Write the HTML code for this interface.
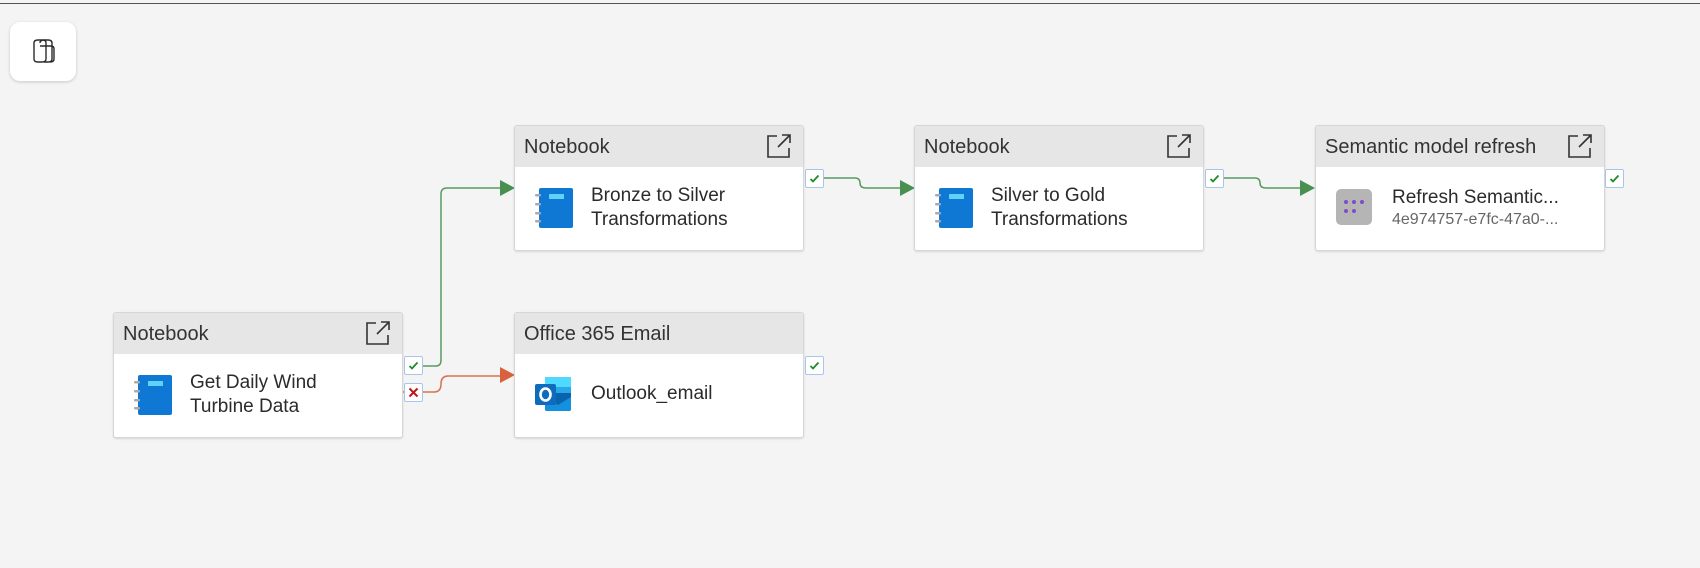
<!DOCTYPE html>
<html><head><meta charset="utf-8"><style>
html,body{margin:0;padding:0;}
body{width:1700px;height:568px;background:#f4f4f4;position:relative;overflow:hidden;font-family:"Liberation Sans",sans-serif;}
.top{position:absolute;left:0;top:3px;width:1700px;height:1px;background:#555;}
.cop{position:absolute;left:10px;top:22px;width:66px;height:59px;background:#fff;border-radius:10px;box-shadow:0 1px 3px rgba(0,0,0,.18);}
.box{position:absolute;width:288px;height:124px;background:#fff;border:1px solid #d6d6d6;border-radius:3px;box-shadow:0 1px 2px rgba(0,0,0,.12);overflow:hidden;}
.hd{height:41px;background:#e6e6e6;position:relative;}
.hd span{position:absolute;left:9px;top:10px;font-size:20px;color:#333;}
.lk{position:absolute;right:10px;top:6px;}
.bd{position:relative;height:83px;}
.t{position:absolute;left:76px;top:17px;font-size:19px;line-height:24px;color:#2b2b2b;}
.ck{position:absolute;width:17px;height:17px;background:#fff;border:1px solid #a9c6ea;border-radius:2px;}
.ck svg{position:absolute;left:2px;top:2px;}
</style></head><body>
<div class="top"></div>
<div class="cop"><svg width="66" height="59" viewBox="0 0 66 59"><g fill="none" stroke="#2a2a2a" stroke-width="1.4" stroke-linejoin="round"><path d="M24 21 Q24 18 28 18 H33 Q36 18 36 21 V37 Q36 40 32 40 H28 Q24 40 24 37Z"/><path d="M30 21 Q30 18 34 18 H38 Q42 18 42 21 V37 Q42 40 38 40 H34"/><path d="M30 24 H41 Q44 24 44 27 V37 Q44 40 40 40"/></g></svg></div>

<svg width="1700" height="568" style="position:absolute;left:0;top:0">
<g fill="none" stroke-width="1.5">
<path d="M422 366 H436 Q441 366 441 360 V194 Q441 188 447 188 H502" stroke="#5a9a62"/>
<path d="M401 392 H434 Q441 392 441 384 Q441 376 448 376 H502" stroke="#d9704f"/>
<path d="M823 178 H855 Q860 178 860 183 Q860 188 866 188 H902" stroke="#5a9a62"/>
<path d="M1223 178 H1255 Q1260 178 1260 183 Q1260 188 1266 188 H1302" stroke="#5a9a62"/>
</g>
<path d="M500 180 L515 188 L500 196Z" fill="#4a8f52"/>
<path d="M500 367 L515 375 L500 383Z" fill="#d9623e"/>
<path d="M900 180 L915 188 L900 196Z" fill="#4a8f52"/>
<path d="M1300 180 L1315 188 L1300 196Z" fill="#4a8f52"/>
</svg>

<div class="box" style="left:113px;top:312px">
 <div class="hd"><span>Notebook</span><svg class="lk" width="28" height="28" viewBox="0 0 28 28" fill="none" stroke="#333" stroke-width="1.6"><path d="M12 4H3V25H24V16"/><path d="M13 15L25 3M17 3H25V11"/></svg></div>
 <div class="bd"><svg style="position:absolute;left:20px;top:21px" width="38" height="40" viewBox="0 0 38 40"><rect x="4" y="0" width="34" height="40" rx="2" fill="#0f78d4"/><rect x="14" y="6" width="15" height="5" fill="#5fd3f7"/><g fill="#aaa"><rect x="0" y="6" width="6" height="2.5" rx="1"/><rect x="0" y="15" width="6" height="2.5" rx="1"/><rect x="0" y="24" width="6" height="2.5" rx="1"/><rect x="0" y="32" width="6" height="2.5" rx="1"/></g></svg><div class="t">Get Daily Wind<br>Turbine Data</div></div>
</div>
<div class="ck" style="left:404px;top:356px"><svg width="13" height="13"><path d="M2.5 7L5 9.5L10.5 3.5" stroke="#1e8a2c" stroke-width="1.8" fill="none"/></svg></div>
<div class="ck" style="left:404px;top:383px"><svg width="13" height="13"><path d="M2.5 2.5L10.5 10.5M10.5 2.5L2.5 10.5" stroke="#c0161b" stroke-width="2" fill="none"/></svg></div>

<div class="box" style="left:514px;top:125px">
 <div class="hd"><span>Notebook</span><svg class="lk" width="28" height="28" viewBox="0 0 28 28" fill="none" stroke="#333" stroke-width="1.6"><path d="M12 4H3V25H24V16"/><path d="M13 15L25 3M17 3H25V11"/></svg></div>
 <div class="bd"><svg style="position:absolute;left:20px;top:21px" width="38" height="40" viewBox="0 0 38 40"><rect x="4" y="0" width="34" height="40" rx="2" fill="#0f78d4"/><rect x="14" y="6" width="15" height="5" fill="#5fd3f7"/><g fill="#aaa"><rect x="0" y="6" width="6" height="2.5" rx="1"/><rect x="0" y="15" width="6" height="2.5" rx="1"/><rect x="0" y="24" width="6" height="2.5" rx="1"/><rect x="0" y="32" width="6" height="2.5" rx="1"/></g></svg><div class="t">Bronze to Silver<br>Transformations</div></div>
</div>
<div class="ck" style="left:805px;top:169px"><svg width="13" height="13"><path d="M2.5 7L5 9.5L10.5 3.5" stroke="#1e8a2c" stroke-width="1.8" fill="none"/></svg></div>

<div class="box" style="left:914px;top:125px">
 <div class="hd"><span>Notebook</span><svg class="lk" width="28" height="28" viewBox="0 0 28 28" fill="none" stroke="#333" stroke-width="1.6"><path d="M12 4H3V25H24V16"/><path d="M13 15L25 3M17 3H25V11"/></svg></div>
 <div class="bd"><svg style="position:absolute;left:20px;top:21px" width="38" height="40" viewBox="0 0 38 40"><rect x="4" y="0" width="34" height="40" rx="2" fill="#0f78d4"/><rect x="14" y="6" width="15" height="5" fill="#5fd3f7"/><g fill="#aaa"><rect x="0" y="6" width="6" height="2.5" rx="1"/><rect x="0" y="15" width="6" height="2.5" rx="1"/><rect x="0" y="24" width="6" height="2.5" rx="1"/><rect x="0" y="32" width="6" height="2.5" rx="1"/></g></svg><div class="t">Silver to Gold<br>Transformations</div></div>
</div>
<div class="ck" style="left:1205px;top:169px"><svg width="13" height="13"><path d="M2.5 7L5 9.5L10.5 3.5" stroke="#1e8a2c" stroke-width="1.8" fill="none"/></svg></div>

<div class="box" style="left:1315px;top:125px">
 <div class="hd"><span>Semantic model refresh</span><svg class="lk" width="28" height="28" viewBox="0 0 28 28" fill="none" stroke="#333" stroke-width="1.6"><path d="M12 4H3V25H24V16"/><path d="M13 15L25 3M17 3H25V11"/></svg></div>
 <div class="bd"><svg style="position:absolute;left:20px;top:22px" width="36" height="36" viewBox="0 0 36 36"><rect width="36" height="36" rx="5" fill="#b5b5b5"/><g fill="#7b4fc9"><circle cx="10" cy="13" r="2"/><circle cx="18" cy="13" r="2"/><circle cx="26" cy="13" r="2"/><circle cx="10" cy="22" r="2"/><circle cx="18" cy="22" r="2"/></g></svg><div class="t" style="top:19px">Refresh Semantic...</div><div style="position:absolute;left:76px;top:44px;font-size:16px;color:#666;">4e974757-e7fc-47a0-...</div></div>
</div>
<div class="ck" style="left:1605px;top:169px"><svg width="13" height="13"><path d="M2.5 7L5 9.5L10.5 3.5" stroke="#1e8a2c" stroke-width="1.8" fill="none"/></svg></div>

<div class="box" style="left:514px;top:312px">
 <div class="hd"><span>Office 365 Email</span></div>
 <div class="bd"><svg style="position:absolute;left:20px;top:21px" width="38" height="38" viewBox="0 0 38 38"><rect x="10" y="2" width="26" height="30" rx="2" fill="#28a8ea"/><rect x="10" y="2" width="26" height="10" fill="#50d9ff"/><path d="M10 18 L36 18 L36 34 Q36 36 34 36 L12 36 Q10 36 10 34Z" fill="#0a64ad"/><path d="M10 22 L23 30 L36 22 V34 Q36 36 34 36 H12 Q10 36 10 34Z" fill="#1490df"/><rect x="0" y="9" width="21" height="21" rx="2" fill="#0f6cbd"/><ellipse cx="10.5" cy="19.5" rx="5" ry="6" fill="none" stroke="#fff" stroke-width="2.6"/></svg><div class="t" style="top:28px">Outlook_email</div></div>
</div>
<div class="ck" style="left:805px;top:356px"><svg width="13" height="13"><path d="M2.5 7L5 9.5L10.5 3.5" stroke="#1e8a2c" stroke-width="1.8" fill="none"/></svg></div>
</body></html>
